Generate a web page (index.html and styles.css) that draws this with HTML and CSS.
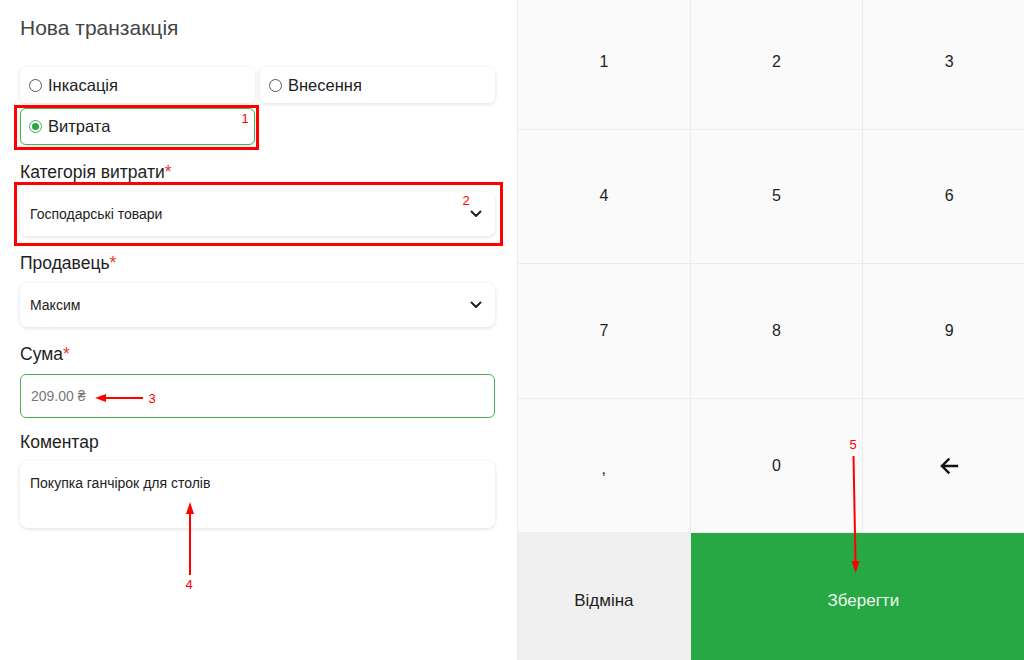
FILE: index.html
```html
<!DOCTYPE html>
<html lang="uk">
<head>
<meta charset="utf-8">
<title>Нова транзакція</title>
<link rel="stylesheet" href="styles.css">
</head>
<body>
<div class="app">
  <section class="form">
    <h1 class="title">Нова транзакція</h1>
    <div class="types">
      <label class="type"><span class="radio"></span>Інкасація</label>
      <label class="type"><span class="radio"></span>Внесення</label>
      <label class="type checked"><span class="radio on"></span>Витрата</label>
    </div>

    <div class="label">Категорія витрати<span class="req">*</span></div>
    <div class="select">
      <span>Господарські товари</span>
      <svg class="chev" width="12" height="8" viewBox="0 0 12 8"><path d="M1.5 1.5 6 6l4.5-4.5" fill="none" stroke="#222" stroke-width="2" stroke-linecap="round" stroke-linejoin="round"/></svg>
    </div>

    <div class="label">Продавець<span class="req">*</span></div>
    <div class="select">
      <span>Максим</span>
      <svg class="chev" width="12" height="8" viewBox="0 0 12 8"><path d="M1.5 1.5 6 6l4.5-4.5" fill="none" stroke="#222" stroke-width="2" stroke-linecap="round" stroke-linejoin="round"/></svg>
    </div>

    <div class="label">Сума<span class="req">*</span></div>
    <div class="input sum">209.00 ₴</div>

    <div class="label comment-label">Коментар</div>
    <div class="textarea">Покупка ганчірок для столів</div>
  </section>

  <section class="keypad">
    <div class="key">1</div>
    <div class="key">2</div>
    <div class="key">3</div>
    <div class="key">4</div>
    <div class="key">5</div>
    <div class="key">6</div>
    <div class="key">7</div>
    <div class="key">8</div>
    <div class="key">9</div>
    <div class="key comma">,</div>
    <div class="key">0</div>
    <div class="key">
      <svg width="20" height="18" viewBox="0 0 20 18"><path d="M18 9H3M9.5 2.5 3 9l6.5 6.5" fill="none" stroke="#111" stroke-width="2.4" stroke-linecap="square"/></svg>
    </div>
    <div class="key cancel">Відміна</div>
    <div class="key save">Зберегти</div>
  </section>
</div>

<svg class="notes" width="1024" height="660" viewBox="0 0 1024 660">
  <rect x="15.5" y="106.5" width="242" height="42" fill="none" stroke="#ff0000" stroke-width="3"/>
  <text x="245" y="123" class="note-num" text-anchor="middle">1</text>
  <rect x="15.5" y="183.5" width="486" height="61" fill="none" stroke="#ff0000" stroke-width="3"/>
  <text x="466" y="205" class="note-num" text-anchor="middle">2</text>
  <line x1="143" y1="398" x2="104" y2="398" stroke="#ff0000" stroke-width="2"/>
  <polygon points="95,398 106,394 106,402" fill="#ff0000"/>
  <text x="152" y="403" class="note-num" text-anchor="middle">3</text>
  <line x1="190" y1="575" x2="190" y2="512" stroke="#ff0000" stroke-width="2"/>
  <polygon points="190,502 186,514 194,514" fill="#ff0000"/>
  <text x="189" y="589" class="note-num" text-anchor="middle">4</text>
  <line x1="853.5" y1="456" x2="855.5" y2="562" stroke="#ff0000" stroke-width="2"/>
  <polygon points="855.7,573 851.5,561 859.5,561" fill="#ff0000"/>
  <text x="853" y="449" class="note-num" text-anchor="middle">5</text>
</svg>
</body>
</html>
```

FILE: styles.css
```css
* { box-sizing: border-box; }

html, body {
  margin: 0;
  padding: 0;
  width: 1024px;
  height: 660px;
  overflow: hidden;
  background: #ffffff;
  font-family: "Liberation Sans", Arial, sans-serif;
  color: #222;
}

.app {
  display: flex;
  width: 1024px;
  height: 660px;
  position: relative;
}

.form {
  width: 517px;
  flex-shrink: 0;
  padding: 0 22px 0 20px;
  background: #fff;
}

.title {
  margin: 16px 0 27px;
  font-size: 21px;
  line-height: 24px;
  font-weight: normal;
  color: #454545;
}

.types {
  display: grid;
  grid-template-columns: 1fr 1fr;
  gap: 5px;
}

.type {
  height: 36px;
  display: flex;
  align-items: center;
  gap: 6px;
  padding-left: 8px;
  background: #fff;
  border: 1px solid transparent;
  border-radius: 6px;
  box-shadow: 0 1px 4px rgba(0, 0, 0, 0.13);
  font-size: 16.5px;
  color: #222;
}

.type.checked {
  height: 37px;
  border-color: #4caf50;
}

.radio {
  width: 13px;
  height: 13px;
  border-radius: 50%;
  border: 1.5px solid #555;
  flex-shrink: 0;
  display: flex;
  align-items: center;
  justify-content: center;
}

.radio.on {
  border-color: #4caf50;
}

.radio.on::after {
  content: "";
  width: 7px;
  height: 7px;
  border-radius: 50%;
  background: #28a745;
}

.label {
  margin: 17px 0 10px;
  font-size: 17.5px;
  line-height: 20px;
  color: #1e1e1e;
}

.label.comment-label {
  margin-top: 14px;
  margin-bottom: 9px;
}

.req {
  color: #e53935;
}

.select {
  height: 44px;
  display: flex;
  align-items: center;
  justify-content: space-between;
  padding: 0 13px 0 10px;
  background: #fff;
  border-radius: 8px;
  box-shadow: 0 1px 4px rgba(0, 0, 0, 0.13);
  font-size: 14px;
  color: #222;
}

.input {
  height: 44px;
  display: flex;
  align-items: center;
  padding: 0 10px;
  background: #fff;
  border: 1px solid #4caf50;
  border-radius: 6px;
  font-size: 14px;
  color: #777;
}

.textarea {
  height: 67px;
  padding: 14px 10px;
  background: #fff;
  border-radius: 8px;
  box-shadow: 0 1px 4px rgba(0, 0, 0, 0.13);
  font-size: 14px;
  line-height: 16px;
  color: #222;
}

.keypad {
  width: 519px;
  height: 673px;
  flex-shrink: 0;
  margin-top: -5px;
  display: grid;
  grid-template-columns: repeat(3, 1fr);
  grid-template-rows: repeat(5, 1fr);
  border-left: 1px solid #ececec;
  background: #fafafa;
}

.key {
  display: flex;
  align-items: center;
  justify-content: center;
  border-right: 1px solid #ececec;
  border-bottom: 1px solid #ececec;
  font-size: 16px;
  color: #1e1e1e;
  background: #fafafa;
}

.key.comma {
  padding-top: 6px;
}

.key.cancel {
  background: #f0f0f0;
  font-size: 17px;
  border-bottom: none;
}

.key.save {
  grid-column: span 2;
  background: #28a745;
  color: #eef7ee;
  font-size: 17px;
  border: none;
}

.notes {
  position: absolute;
  left: 0;
  top: 0;
  pointer-events: none;
}

.note-num {
  fill: #ff0000;
  font-family: "Liberation Sans", Arial, sans-serif;
  font-size: 13px;
}
```
